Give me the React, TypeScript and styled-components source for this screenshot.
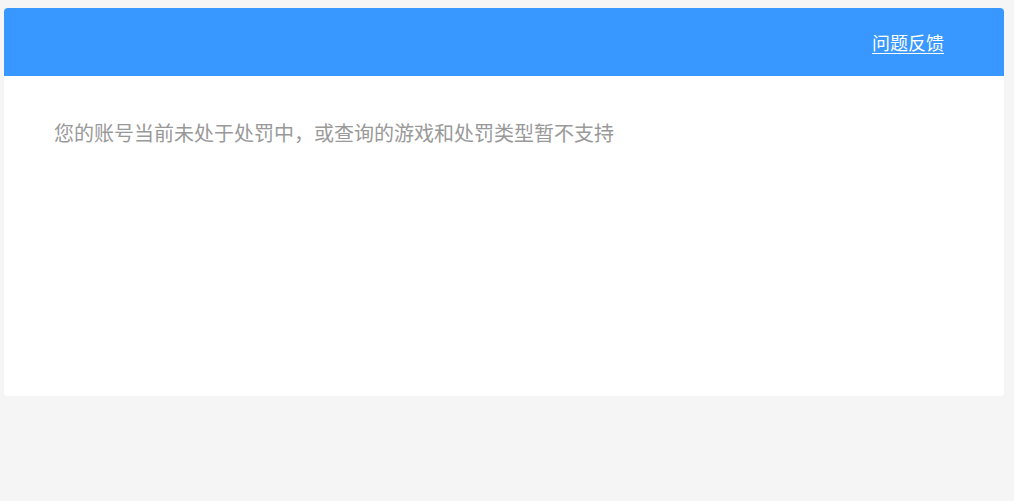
import React from 'react';
import styled, { createGlobalStyle } from 'styled-components';

const GlobalStyle = createGlobalStyle`
  html, body {
    margin: 0;
    padding: 0;
    background: #f5f5f5;
    font-family: "Microsoft YaHei", "Noto Sans CJK SC", "Liberation Sans", sans-serif;
  }
`;

function App() {
  return (
    <Page>
      <GlobalStyle />
      <Card>
        <Header>
          <FeedbackLink href="#">问题反馈</FeedbackLink>
        </Header>
        <Body>
          <Message>您的账号当前未处于处罚中，或查询的游戏和处罚类型暂不支持</Message>
        </Body>
      </Card>
    </Page>
  );
}

const Page = styled.div`
  padding: 8px 10px 0 4px;
  min-height: 501px;
  box-sizing: border-box;
`;

const Card = styled.div`
  width: 1000px;
  background: #fff;
  border-radius: 4px;
  overflow: hidden;
`;

const Header = styled.div`
  height: 68px;
  background: #3898ff;
  display: flex;
  align-items: center;
  justify-content: flex-end;
  padding: 0 60px;
`;

const FeedbackLink = styled.a`
  color: #fff;
  font-size: 18px;
  line-height: 24px;
  text-decoration: underline;
  text-underline-offset: 3px;
`;

const Body = styled.div`
  height: 320px;
  box-sizing: border-box;
  padding: 44px 50px 0;
`;

const Message = styled.p`
  margin: 0;
  font-size: 20px;
  line-height: 26px;
  color: #999;
`;

export default App;
